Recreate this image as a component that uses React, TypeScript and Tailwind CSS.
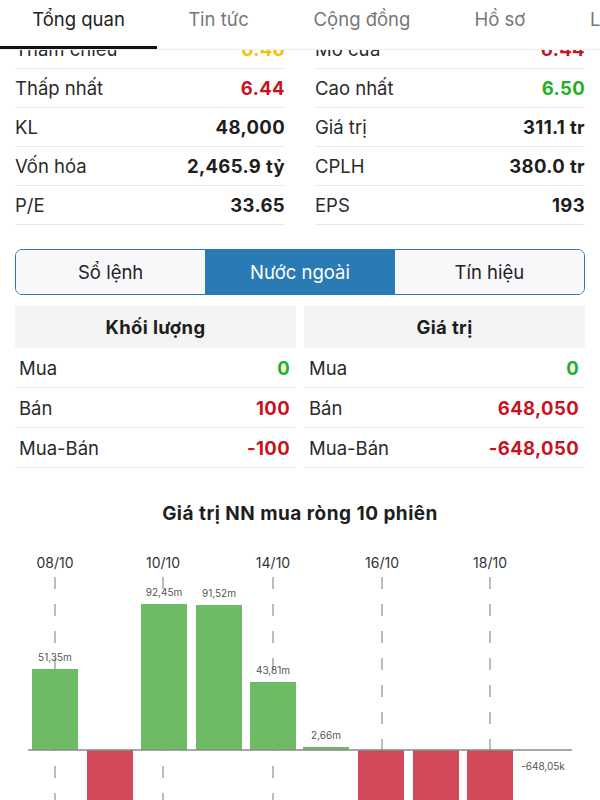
import React from "react";

const RED = "text-[#c8141e]";
const GREEN = "text-[#1fb124]";

type Row = { label: string; value: string; color?: string };

const left: Row[] = [
  { label: "Tham chiếu", value: "6.46", color: "text-[#f2c200]" },
  { label: "Thấp nhất", value: "6.44", color: RED },
  { label: "KL", value: "48,000" },
  { label: "Vốn hóa", value: "2,465.9 tỷ" },
  { label: "P/E", value: "33.65" },
];
const right: Row[] = [
  { label: "Mở cửa", value: "6.44", color: RED },
  { label: "Cao nhất", value: "6.50", color: GREEN },
  { label: "Giá trị", value: "311.1 tr" },
  { label: "CPLH", value: "380.0 tr" },
  { label: "EPS", value: "193" },
];

function InfoRow({ r }: { r: Row }) {
  return (
    <div className="flex h-[39px] items-center justify-between border-b border-[#e9e9e9]">
      <span className="text-[#2a2a2a]">{r.label}</span>
      <span className={`font-bold tracking-[0.02em] ${r.color ?? "text-[#1e1e1e]"}`}>{r.value}</span>
    </div>
  );
}

type PRow = { label: string; value: string; color: string };

function Panel({ title, rows, pad }: { title: string; rows: PRow[]; pad: string }) {
  return (
    <div>
      <div className="flex h-[42px] items-center justify-center bg-[#f4f4f4] font-bold tracking-[0.02em] text-[#1e1e1e]">
        {title}
      </div>
      {rows.map((r) => (
        <div
          key={r.label}
          className={`flex h-[40px] items-center justify-between border-b border-[#ececec] ${pad}`}
        >
          <span className="text-[#2a2a2a]">{r.label}</span>
          <span className={`font-bold tracking-[0.02em] ${r.color}`}>{r.value}</span>
        </div>
      ))}
    </div>
  );
}

const bars = [
  { x: 32, top: 669, label: "51,35m", pos: true },
  { x: 87, top: 0, label: "", pos: false },
  { x: 141, top: 604, label: "92,45m", pos: true },
  { x: 196, top: 605, label: "91,52m", pos: true },
  { x: 250, top: 682, label: "43,81m", pos: true },
  { x: 303, top: 747, label: "2,66m", pos: true },
  { x: 358, top: 0, label: "", pos: false },
  { x: 413, top: 0, label: "", pos: false },
  { x: 467, top: 0, label: "", pos: false },
];

const dates = [
  { x: 55, t: "08/10" },
  { x: 163, t: "10/10" },
  { x: 273, t: "14/10" },
  { x: 382, t: "16/10" },
  { x: 490, t: "18/10" },
];

function Chart() {
  const base = 750;
  return (
    <svg width="600" height="274" viewBox="0 526 600 274" className="block">
      {dates.map((d) => (
        <g key={d.t}>
          <text
            x={d.x}
            y={568}
            textAnchor="middle"
            fontSize="14"
            fill="#333"
            fontFamily="Inter, sans-serif"
          >
            {d.t}
          </text>
          <line
            x1={d.x}
            x2={d.x}
            y1={577}
            y2={800}
            stroke="#a8a8a8"
            strokeWidth="1.5"
            strokeDasharray="12 15"
          />
        </g>
      ))}
      {bars.map((b, i) =>
        b.pos ? (
          <g key={i}>
            <rect x={b.x} y={b.top} width={46} height={base - b.top} fill="#6dbb65" />
            <text
              x={b.x + 23}
              y={b.top - 8}
              textAnchor="middle"
              fontSize="10"
              fill="#555"
              fontFamily="Inter, sans-serif"
            >
              {b.label}
            </text>
          </g>
        ) : (
          <rect key={i} x={b.x} y={base} width={46} height={60} fill="#d24a5a" />
        )
      )}
      <line x1={28} x2={572} y1={base} y2={base} stroke="#8a8a8a" strokeWidth="1.5" />
      <text
        x={543}
        y={770}
        textAnchor="middle"
        fontSize="10"
        fill="#555"
        fontFamily="Inter, sans-serif"
      >
        -648,05k
      </text>
    </svg>
  );
}

export default function App() {
  return (
    <div className="h-[800px] w-[600px] overflow-hidden bg-white font-['Inter',sans-serif] text-[18.5px] leading-[24px]">
      <div className="flex h-[50px] overflow-hidden whitespace-nowrap border-b border-[#eeeeee]">
        <div className="h-full w-[157px] shrink-0 border-b-[3px] border-[#111] pt-[7px] text-center text-[#222]">
          Tổng quan
        </div>
        <div className="h-full w-[123px] shrink-0 pt-[7px] text-center text-[#777]">Tin tức</div>
        <div className="h-full w-[164px] shrink-0 pt-[7px] text-center text-[#777]">Cộng đồng</div>
        <div className="h-full w-[112px] shrink-0 pt-[7px] text-center text-[#777]">Hồ sơ</div>
        <div className="h-full shrink-0 pl-[34px] pt-[7px] text-[#777]">Lịch sử</div>
      </div>
      <div className="h-[175px] overflow-hidden">
        <div className="-mt-[20px] grid grid-cols-2 gap-[30px] px-[15px]">
          <div>
            {left.map((r) => (
              <InfoRow key={r.label} r={r} />
            ))}
          </div>
          <div>
            {right.map((r) => (
              <InfoRow key={r.label} r={r} />
            ))}
          </div>
        </div>
      </div>
      <div className="mx-[15px] mt-[24px] grid h-[46px] grid-cols-3 overflow-hidden rounded-[7px] border border-[#2a7ab5]">
        <div className="flex items-center justify-center bg-[#f8f8fa] text-[#222]">Sổ lệnh</div>
        <div className="flex items-center justify-center bg-[#2a7ab5] text-white">Nước ngoài</div>
        <div className="flex items-center justify-center bg-[#f8f8fa] text-[#222]">Tín hiệu</div>
      </div>
      <div className="mt-[11px] grid grid-cols-2 gap-[8px] px-[15px]">
        <Panel
          title="Khối lượng"
          pad="pl-[4px] pr-[6px]"
          rows={[
            { label: "Mua", value: "0", color: GREEN },
            { label: "Bán", value: "100", color: RED },
            { label: "Mua-Bán", value: "-100", color: RED },
          ]}
        />
        <Panel
          title="Giá trị"
          pad="pl-[5px] pr-[6px]"
          rows={[
            { label: "Mua", value: "0", color: GREEN },
            { label: "Bán", value: "648,050", color: RED },
            { label: "Mua-Bán", value: "-648,050", color: RED },
          ]}
        />
      </div>
      <div className="mt-[34px] text-center text-[19px] font-bold tracking-[0.025em] text-[#1e1e1e]">
        Giá trị NN mua ròng 10 phiên
      </div>
      <Chart />
    </div>
  );
}
